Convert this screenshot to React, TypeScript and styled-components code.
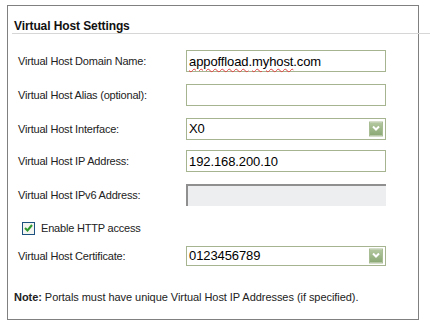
import styled, { createGlobalStyle } from "styled-components";

const GlobalStyle = createGlobalStyle`
  body {
    margin: 0;
    background: #fff;
    font-family: "Liberation Sans", Arial, sans-serif;
    color: #111;
  }
`;

function ChevronIcon() {
  return (
    <svg width="8" height="6" viewBox="0 0 8 6">
      <path d="M1 1 L4 4 L7 1" stroke="#fff" strokeWidth="2" fill="none" />
    </svg>
  );
}

function Settings() {
  return (
    <Panel>
      <Title>Virtual Host Settings</Title>
      <Rows>
        <Row $h={34}>
          <Label>Virtual Host Domain Name:</Label>
          <Field>
            <Misspelt>appoffload</Misspelt>.<Misspelt>myhost</Misspelt>.com
          </Field>
        </Row>
        <Row $h={34}>
          <Label>Virtual Host Alias (optional):</Label>
          <Field />
        </Row>
        <Row $h={33}>
          <Label>Virtual Host Interface:</Label>
          <Field>
            X0
            <Arrow>
              <ChevronIcon />
            </Arrow>
          </Field>
        </Row>
        <Row $h={32}>
          <Label>Virtual Host IP Address:</Label>
          <Field>192.168.200.10</Field>
        </Row>
        <Row $h={35}>
          <Label>Virtual Host IPv6 Address:</Label>
          <Field $disabled />
        </Row>
        <Row $h={32}>
          <Check>
            <Box>
              <svg width="9" height="8" viewBox="0 0 9 8">
                <path d="M1 4 L3.5 6.5 L8 1" stroke="#2f9a2f" strokeWidth="2" fill="none" />
              </svg>
            </Box>
            Enable HTTP access
          </Check>
        </Row>
        <Row $h={23}>
          <Label>Virtual Host Certificate:</Label>
          <Field $short>
            0123456789
            <Arrow>
              <ChevronIcon />
            </Arrow>
          </Field>
        </Row>
      </Rows>
      <Note>
        <b>Note:</b> Portals must have unique Virtual Host IP Addresses (if specified).
      </Note>
    </Panel>
  );
}

export default function App() {
  return (
    <>
      <GlobalStyle />
      <Settings />
    </>
  );
}

const Panel = styled.div`
  margin: 5px 0 0 7px;
  width: 410px;
  height: 313px;
  border: 1px solid #808080;
`;

const Title = styled.div`
  margin-left: 4px;
  margin-right: -13px;
  padding: 13px 0 0 2px;
  line-height: 14px;
  font-size: 12px;
  font-weight: bold;
  letter-spacing: -0.1px;
  color: #111;
  border-bottom: 1px solid #d6d6d6;
`;

const Rows = styled.div`
  margin-top: 10px;
  padding-left: 10px;
  display: flex;
  flex-direction: column;
`;

const Row = styled.div<{ $h: number }>`
  height: ${(p) => p.$h}px;
  display: flex;
  align-items: center;
`;

const Label = styled.div`
  width: 168px;
  font-size: 11px;
  letter-spacing: -0.2px;
  color: #222;
`;

const Field = styled.div<{ $disabled?: boolean; $short?: boolean }>`
  position: relative;
  box-sizing: border-box;
  width: 200px;
  height: ${(p) => (p.$short ? 20 : 22)}px;
  padding-left: 2px;
  display: flex;
  align-items: center;
  font-size: 13px;
  letter-spacing: -0.1px;
  color: #000;
  background: ${(p) => (p.$disabled ? "#eceef0" : "#fff")};
  border: 1px solid #a6b58f;
  ${(p) =>
    p.$disabled &&
    `
    border: none;
    border-top: 2px solid #8f8f8f;
    border-left: 2px solid #8f8f8f;
  `}
`;

const Misspelt = styled.span`
  text-decoration: underline wavy #e04040;
  text-decoration-thickness: 1px;
  text-underline-offset: 2px;
`;

const Arrow = styled.span`
  position: absolute;
  right: 2px;
  top: 50%;
  transform: translateY(-50%);
  width: 14px;
  height: 15px;
  box-sizing: border-box;
  display: flex;
  align-items: center;
  justify-content: center;
  background: linear-gradient(#b4c8a0, #8aa874);
  border: 1px solid #a9bd95;
`;

const Check = styled.label`
  display: flex;
  align-items: center;
  gap: 6px;
  padding-left: 4px;
  font-size: 11px;
  letter-spacing: -0.2px;
  color: #222;
`;

const Box = styled.span`
  box-sizing: border-box;
  width: 13px;
  height: 13px;
  display: flex;
  align-items: center;
  justify-content: center;
  border: 1px solid #1c5180;
  background: #f4f4f0;
`;

const Note = styled.div`
  margin-top: 23px;
  padding-left: 6px;
  line-height: 14px;
  font-size: 11px;
  letter-spacing: -0.05px;
  color: #222;
`;
